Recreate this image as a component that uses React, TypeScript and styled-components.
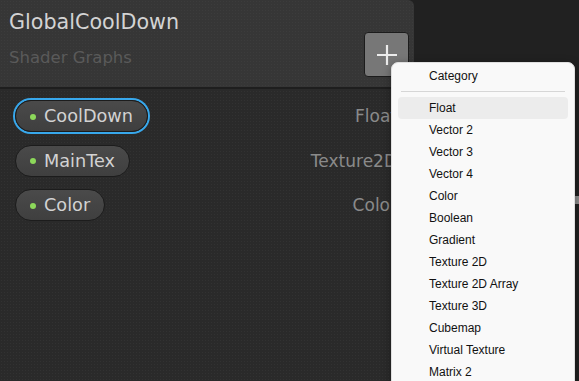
import React from "react";
import styled, { createGlobalStyle } from "styled-components";

const GlobalStyle = createGlobalStyle`
  html, body {
    margin: 0;
    padding: 0;
    background: #212121;
  }
  * {
    box-sizing: border-box;
  }
`;

type Prop = { name: string; type: string; selected?: boolean };

const properties: Prop[] = [
  { name: "CoolDown", type: "Float", selected: true },
  { name: "MainTex", type: "Texture2D" },
  { name: "Color", type: "Color" },
];

const menuItems = [
  "Float",
  "Vector 2",
  "Vector 3",
  "Vector 4",
  "Color",
  "Boolean",
  "Gradient",
  "Texture 2D",
  "Texture 2D Array",
  "Texture 3D",
  "Cubemap",
  "Virtual Texture",
  "Matrix 2",
];

const App = () => {
  return (
    <Page>
      <GlobalStyle />
      <Blackboard>
        <Header>
          <Titles>
            <Title>GlobalCoolDown</Title>
            <Subtitle>Shader Graphs</Subtitle>
          </Titles>
          <AddButton>
            <svg width="22" height="22" viewBox="0 0 22 22">
              <path d="M11 1v20M1 11h20" stroke="#ececec" strokeWidth="2.2" />
            </svg>
          </AddButton>
        </Header>
        <PropList>
          {properties.map((p) => (
            <PropRow key={p.name}>
              <Pill selected={p.selected}>
                <Dot />
                {p.name}
              </Pill>
              <TypeLabel>{p.type}</TypeLabel>
            </PropRow>
          ))}
        </PropList>
      </Blackboard>
      <Scroller />
      <Menu>
        <MenuItem>Category</MenuItem>
        <Separator />
        {menuItems.map((item, i) => (
          <MenuItem key={item} active={i === 0}>
            {item}
          </MenuItem>
        ))}
      </Menu>
    </Page>
  );
};

export default App;

const Page = styled.div`
  position: relative;
  display: flex;
  width: 579px;
  height: 381px;
  overflow: hidden;
  background: #212121;
  font-family: "DejaVu Sans", Verdana, sans-serif;
`;

const Blackboard = styled.div`
  width: 414px;
  height: 381px;
  display: flex;
  flex-direction: column;
  background-color: #2a2a2a;
  background-image: radial-gradient(rgba(255, 255, 255, 0.035) 0.7px, transparent 0.9px);
  background-size: 3px 3px;
  border-top-right-radius: 6px;
  overflow: hidden;
`;

const Header = styled.div`
  height: 89px;
  display: flex;
  justify-content: space-between;
  align-items: flex-start;
  padding: 9px 5px 0 9px;
  background-color: #363636;
  background-image: radial-gradient(rgba(255, 255, 255, 0.03) 0.7px, transparent 0.9px);
  background-size: 3px 3px;
  border-bottom: 2px solid #1e1e1e;
`;

const Titles = styled.div`
  display: flex;
  flex-direction: column;
  gap: 12px;
`;

const Title = styled.div`
  font-size: 20.7px;
  line-height: 26px;
  color: #d3d3d3;
`;

const Subtitle = styled.div`
  font-size: 16.5px;
  line-height: 22px;
  color: #5a5a5a;
`;

const AddButton = styled.div`
  width: 45px;
  height: 45px;
  margin-top: 23px;
  display: flex;
  align-items: center;
  justify-content: center;
  background: #777777;
  border: 1px solid #1c1c1c;
  border-radius: 4px;
`;

const PropList = styled.div`
  display: flex;
  flex-direction: column;
  padding-top: 5px;
`;

const PropRow = styled.div`
  height: 44.5px;
  display: flex;
  align-items: center;
  justify-content: space-between;
  padding: 0 17px 0 15px;
`;

const Pill = styled.div<{ selected?: boolean }>`
  height: 32px;
  display: flex;
  align-items: center;
  gap: 8px;
  padding: 0 14px 0 14px;
  font-size: 17.7px;
  color: #d2d2d2;
  background: linear-gradient(#4a4a4a, #3f3f3f);
  border: 1px solid #1c1c1c;
  border-radius: 16px;
  box-shadow: ${(p) => (p.selected ? "0 0 0 2px #38a8ec" : "none")};
`;

const Dot = styled.span`
  width: 6px;
  height: 6px;
  border-radius: 50%;
  background: #8cd85a;
  margin-top: 1px;
`;

const TypeLabel = styled.div`
  font-size: 17px;
  color: #8a8a8a;
`;

const Scroller = styled.div`
  position: absolute;
  right: 0;
  top: 196px;
  width: 5px;
  height: 8px;
  background: #8a8a8a;
`;

const Menu = styled.div`
  position: absolute;
  left: 391px;
  top: 62px;
  width: 184px;
  height: 340px;
  padding: 2px 6px;
  background: #f9f9f9;
  border: 1px solid #e0e0e0;
  border-radius: 7px;
  box-shadow: 0 2px 8px rgba(0, 0, 0, 0.35);
  font-family: "Liberation Sans", Arial, sans-serif;
`;

const MenuItem = styled.div<{ active?: boolean }>`
  height: 22px;
  display: flex;
  align-items: center;
  padding-left: 31px;
  font-size: 12px;
  color: #111111;
  border-radius: 4px;
  background: ${(p) => (p.active ? "#ececec" : "transparent")};
`;

const Separator = styled.div`
  height: 1px;
  margin: 4px 3px 5px;
  background: #d6d6d6;
`;
